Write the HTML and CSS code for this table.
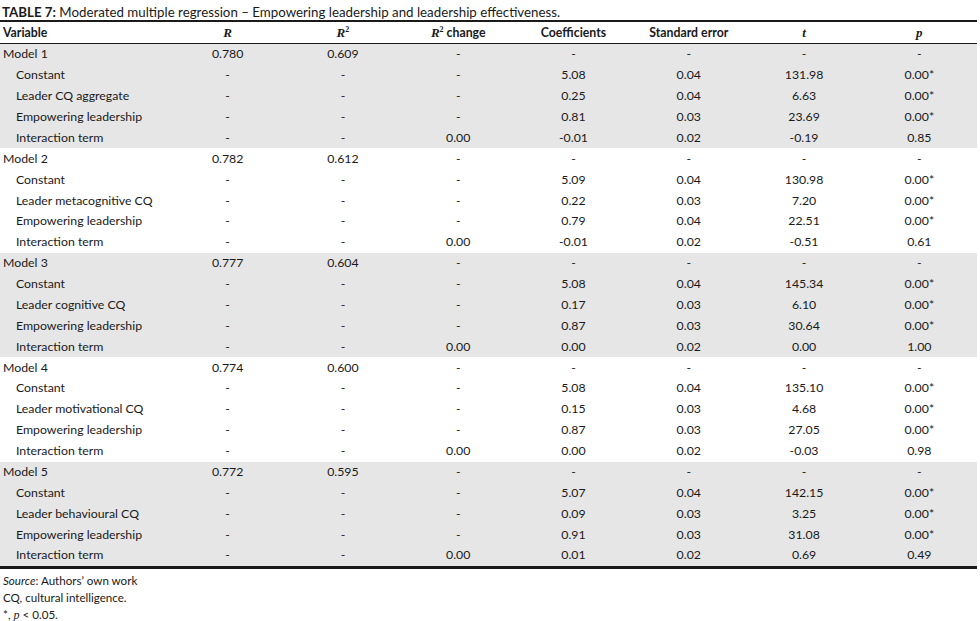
FILE: index.html
```html
<!DOCTYPE html>
<html>
<head>
<meta charset="utf-8">
<link rel="stylesheet" href="styles.css">
</head>
<body>
<div class="wrap">
  <div class="title"><b>TABLE 7:</b> Moderated multiple regression – Empowering leadership and leadership effectiveness.</div>
  <table class="tbl">
    <colgroup>
      <col class="c-var"><col><col><col><col><col><col><col>
    </colgroup>
    <thead>
      <tr>
        <th class="var">Variable</th>
        <th><i class="m">R</i></th>
        <th><i class="m">R</i><sup class="m">2</sup></th>
        <th><i class="m">R</i><sup class="m">2</sup> change</th>
        <th>Coefficients</th>
        <th>Standard error</th>
        <th><i class="m">t</i></th>
        <th><i class="m">p</i></th>
      </tr>
    </thead>
    <tbody class="shade">
      <tr><td class="var">Model 1</td><td>0.780</td><td>0.609</td><td>-</td><td>-</td><td>-</td><td>-</td><td>-</td></tr>
      <tr><td class="sub">Constant</td><td>-</td><td>-</td><td>-</td><td>5.08</td><td>0.04</td><td>131.98</td><td>0.00*</td></tr>
      <tr><td class="sub">Leader CQ aggregate</td><td>-</td><td>-</td><td>-</td><td>0.25</td><td>0.04</td><td>6.63</td><td>0.00*</td></tr>
      <tr><td class="sub">Empowering leadership</td><td>-</td><td>-</td><td>-</td><td>0.81</td><td>0.03</td><td>23.69</td><td>0.00*</td></tr>
      <tr><td class="sub">Interaction term</td><td>-</td><td>-</td><td>0.00</td><td>-0.01</td><td>0.02</td><td>-0.19</td><td>0.85</td></tr>
    </tbody>
    <tbody>
      <tr><td class="var">Model 2</td><td>0.782</td><td>0.612</td><td>-</td><td>-</td><td>-</td><td>-</td><td>-</td></tr>
      <tr><td class="sub">Constant</td><td>-</td><td>-</td><td>-</td><td>5.09</td><td>0.04</td><td>130.98</td><td>0.00*</td></tr>
      <tr><td class="sub">Leader metacognitive CQ</td><td>-</td><td>-</td><td>-</td><td>0.22</td><td>0.03</td><td>7.20</td><td>0.00*</td></tr>
      <tr><td class="sub">Empowering leadership</td><td>-</td><td>-</td><td>-</td><td>0.79</td><td>0.04</td><td>22.51</td><td>0.00*</td></tr>
      <tr><td class="sub">Interaction term</td><td>-</td><td>-</td><td>0.00</td><td>-0.01</td><td>0.02</td><td>-0.51</td><td>0.61</td></tr>
    </tbody>
    <tbody class="shade">
      <tr><td class="var">Model 3</td><td>0.777</td><td>0.604</td><td>-</td><td>-</td><td>-</td><td>-</td><td>-</td></tr>
      <tr><td class="sub">Constant</td><td>-</td><td>-</td><td>-</td><td>5.08</td><td>0.04</td><td>145.34</td><td>0.00*</td></tr>
      <tr><td class="sub">Leader cognitive CQ</td><td>-</td><td>-</td><td>-</td><td>0.17</td><td>0.03</td><td>6.10</td><td>0.00*</td></tr>
      <tr><td class="sub">Empowering leadership</td><td>-</td><td>-</td><td>-</td><td>0.87</td><td>0.03</td><td>30.64</td><td>0.00*</td></tr>
      <tr><td class="sub">Interaction term</td><td>-</td><td>-</td><td>0.00</td><td>0.00</td><td>0.02</td><td>0.00</td><td>1.00</td></tr>
    </tbody>
    <tbody>
      <tr><td class="var">Model 4</td><td>0.774</td><td>0.600</td><td>-</td><td>-</td><td>-</td><td>-</td><td>-</td></tr>
      <tr><td class="sub">Constant</td><td>-</td><td>-</td><td>-</td><td>5.08</td><td>0.04</td><td>135.10</td><td>0.00*</td></tr>
      <tr><td class="sub">Leader motivational CQ</td><td>-</td><td>-</td><td>-</td><td>0.15</td><td>0.03</td><td>4.68</td><td>0.00*</td></tr>
      <tr><td class="sub">Empowering leadership</td><td>-</td><td>-</td><td>-</td><td>0.87</td><td>0.03</td><td>27.05</td><td>0.00*</td></tr>
      <tr><td class="sub">Interaction term</td><td>-</td><td>-</td><td>0.00</td><td>0.00</td><td>0.02</td><td>-0.03</td><td>0.98</td></tr>
    </tbody>
    <tbody class="shade last">
      <tr><td class="var">Model 5</td><td>0.772</td><td>0.595</td><td>-</td><td>-</td><td>-</td><td>-</td><td>-</td></tr>
      <tr><td class="sub">Constant</td><td>-</td><td>-</td><td>-</td><td>5.07</td><td>0.04</td><td>142.15</td><td>0.00*</td></tr>
      <tr><td class="sub">Leader behavioural CQ</td><td>-</td><td>-</td><td>-</td><td>0.09</td><td>0.03</td><td>3.25</td><td>0.00*</td></tr>
      <tr><td class="sub">Empowering leadership</td><td>-</td><td>-</td><td>-</td><td>0.91</td><td>0.03</td><td>31.08</td><td>0.00*</td></tr>
      <tr><td class="sub">Interaction term</td><td>-</td><td>-</td><td>0.00</td><td>0.01</td><td>0.02</td><td>0.69</td><td>0.49</td></tr>
    </tbody>
  </table>
  <div class="notes">
    <div><i>Source</i>: Authors’ own work</div>
    <div>CQ, cultural intelligence.</div>
    <div>*, <i class="m">p</i> &lt; 0.05.</div>
  </div>
</div>
</body>
</html>
```
FILE: styles.css
```css
html, body {
  margin: 0;
  padding: 0;
  background: #ffffff;
}
body {
  font-family: "Lato", "Open Sans", sans-serif;
  color: #1a1a1a;
  font-size: 12.3px;
}
.wrap {
  width: 977px;
}
.title {
  font-size: 13.3px;
  line-height: 16px;
  padding: 4px 0 0 2px;
  height: 16px;
}
.title b {
  font-weight: 700;
}
.tbl {
  width: 977px;
  border-collapse: collapse;
  table-layout: fixed;
  border-top: 2px solid #1a1a1a;
  border-bottom: 3px solid #1a1a1a;
}
.c-var {
  width: 170px;
}
.tbl th {
  font-weight: 700;
  text-align: center;
  height: 21px;
  padding: 0;
  border-bottom: 1px solid #1a1a1a;
  font-size: 12.3px;
  vertical-align: middle;
}
.tbl th.var {
  text-align: left;
  padding-left: 3px;
}
.m {
  font-family: "Liberation Serif", "DejaVu Serif", serif;
  font-style: italic;
  font-size: 13px;
}
sup.m {
  font-style: normal;
  font-size: 8px;
  vertical-align: 5px;
  line-height: 0;
}
.tbl td {
  height: 20.88px;
  padding: 0;
  text-align: center;
  vertical-align: middle;
  line-height: 14px;
}
.tbl td.var {
  text-align: left;
  padding-left: 3px;
}
.tbl td.sub {
  text-align: left;
  padding-left: 16px;
}
.shade td {
  background: #e6e6e6;
}
.notes {
  padding: 3px 0 0 3px;
  font-size: 11.6px;
  line-height: 17px;
}
.notes .m {
  font-size: 12px;
}
```
